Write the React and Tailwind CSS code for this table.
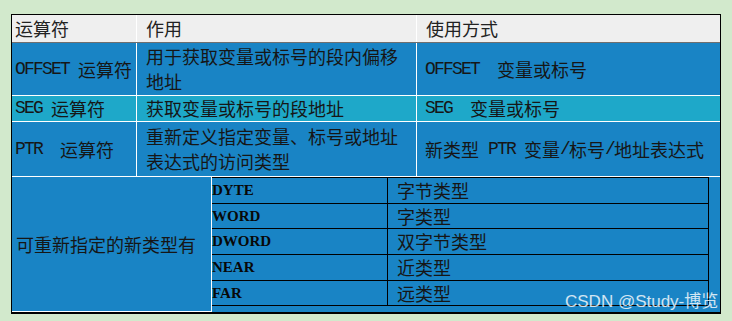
import React from "react";

const CJK = "font-['Noto_Sans_CJK_SC','Noto_Sans',sans-serif]";

// latin part of the SimSun-like text: half width mono
const M = ({ children }) => (
  <span className="font-['Liberation_Mono',monospace] text-[18px] tracking-[-1.8px] whitespace-pre">{children}</span>
);

const typeRows = [
  ["DYTE", "字节类型"],
  ["WORD", "字类型"],
  ["DWORD", "双字节类型"],
  ["NEAR", "近类型"],
  ["FAR", "远类型"],
];

const rowHeights = ["h-[26px]", "h-[25px]", "h-[26px]", "h-[26px]", "h-[25px]"];

export default function App() {
  return (
    <div className={`relative w-[732px] h-[321px] bg-[#d2e9cc] pt-[14px] pl-[11px] ${CJK} text-[18px] text-[#161616]`}>
      <div className="w-[710px] border border-black border-b-2 bg-[#1984c5] flex flex-col">
        {/* header */}
        <div className="flex h-[28px] bg-[#efefef] border-b border-[#6f6f6f] text-[#222]">
          <div className="w-[125px] pl-[3px] flex items-center border-r border-white">运算符</div>
          <div className="w-[280px] pl-[9px] flex items-center border-r border-white">作用</div>
          <div className="flex-1 pl-[9px] flex items-center">使用方式</div>
        </div>

        {/* OFFSET */}
        <div className="flex h-[53px] border-b border-white">
          <div className="w-[125px] pl-[3px] flex items-center border-r border-white whitespace-nowrap">
            <M>OFFSET </M>运算符
          </div>
          <div className="w-[280px] pl-[9px] flex items-center border-r border-white leading-[25px]">
            <span>
              用于获取变量或标号的段内偏移
              <br />
              地址
            </span>
          </div>
          <div className="flex-1 pl-[8px] flex items-center whitespace-nowrap">
            <M>OFFSET  </M>变量或标号
          </div>
        </div>

        {/* SEG */}
        <div className="flex h-[26px] bg-[#1ea8c9] border-b border-white">
          <div className="w-[125px] pl-[3px] flex items-center border-r border-white whitespace-nowrap">
            <M>SEG </M>运算符
          </div>
          <div className="w-[280px] pl-[9px] flex items-center border-r border-white">获取变量或标号的段地址</div>
          <div className="flex-1 pl-[8px] flex items-center whitespace-nowrap">
            <M>SEG  </M>变量或标号
          </div>
        </div>

        {/* PTR */}
        <div className="flex h-[55px] border-b border-white">
          <div className="w-[125px] pl-[3px] flex items-center border-r border-white whitespace-nowrap">
            <M>PTR  </M>运算符
          </div>
          <div className="w-[280px] pl-[9px] flex items-center border-r border-white leading-[25px]">
            <span>
              重新定义指定变量、标号或地址
              <br />
              表达式的访问类型
            </span>
          </div>
          <div className="flex-1 pl-[8px] flex items-center whitespace-nowrap">
            新类型<M> PTR </M>变量<M>/</M>标号<M>/</M>地址表达式
          </div>
        </div>

        {/* new types */}
        <div className="flex h-[135px]">
          <div className="w-[200px] pl-[4px] flex items-center border-r border-b border-white whitespace-nowrap">
            可重新指定的新类型有
          </div>
          <div className="w-[497px] self-start border-t border-r border-black">
            {typeRows.map(([k, v], i) => (
              <div key={k} className={`flex ${rowHeights[i]} border-b border-black`}>
                <div className="w-[176px] flex items-center border-r border-black font-['Liberation_Serif',serif] font-bold text-[15px] text-[#080808]">
                  {k}
                </div>
                <div className="flex-1 pl-[9px] flex items-center">{v}</div>
              </div>
            ))}
          </div>
        </div>
      </div>

      <div className="absolute left-[565px] top-[289px] font-['Liberation_Sans','Noto_Sans_CJK_SC',sans-serif] text-[17px] text-white/80">
        CSDN @Study-博览
      </div>
    </div>
  );
}
